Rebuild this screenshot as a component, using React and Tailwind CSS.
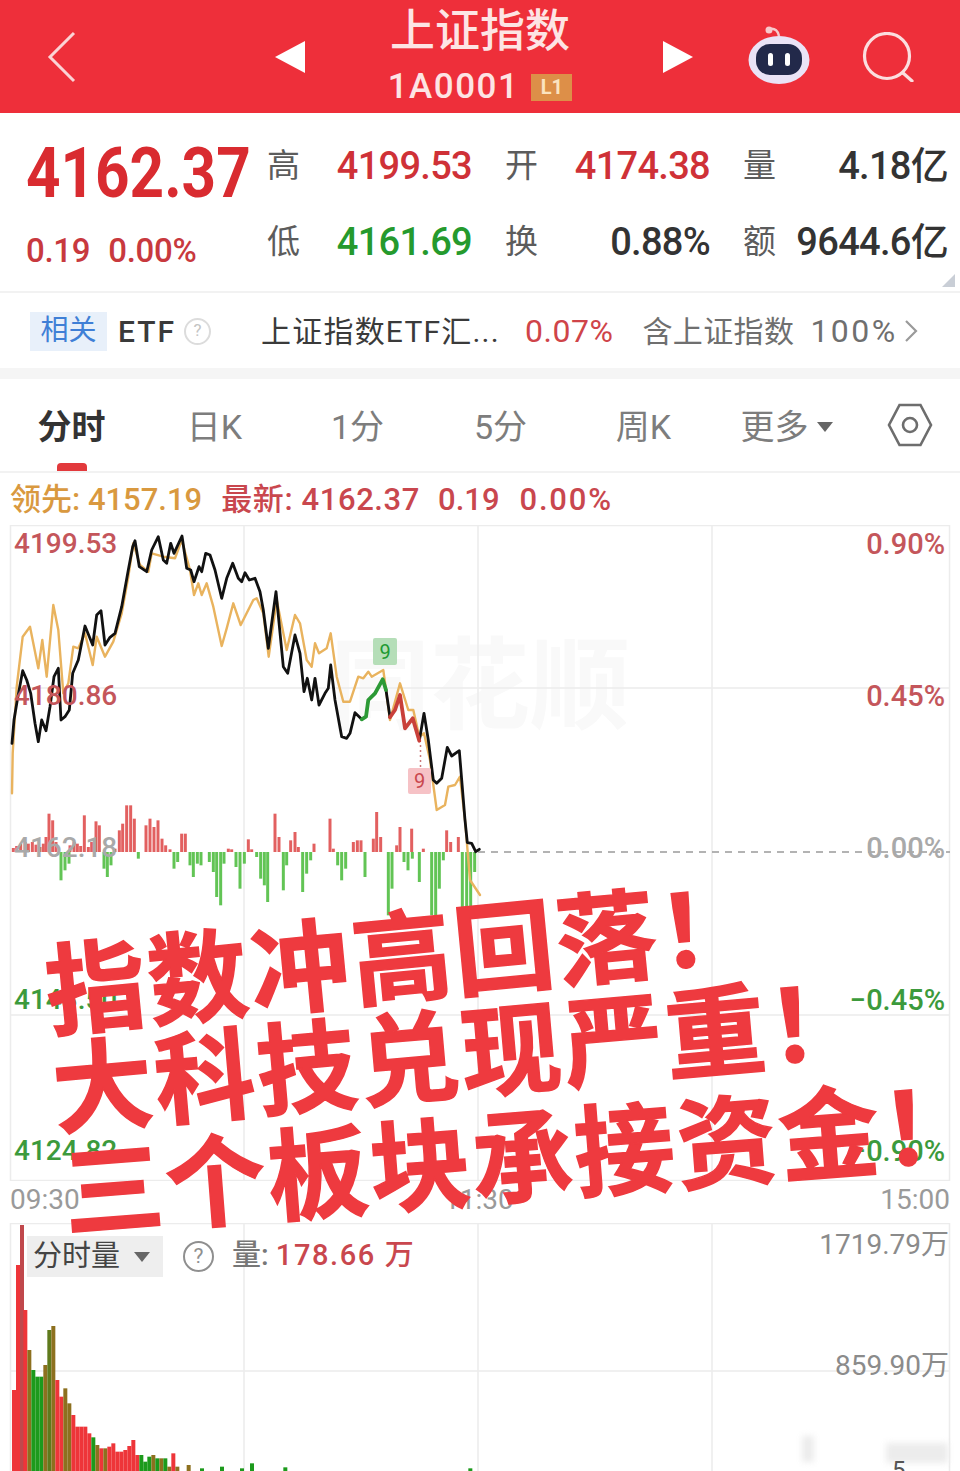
// App.jsx
import React from 'react';

// chart points are read off a 3x crop that starts at (0,520)
const toLine = (pts) => pts.map(([x, y]) => `${(x / 3).toFixed(1)},${(520 + y / 3).toFixed(1)}`).join(' ');

const blackA = [[36,670],[42,600],[52,540],[68,452],[80,480],[92,520],[105,610],[115,665],[125,600],[138,632],[150,560],[162,470],[175,445],[183,600],[195,590],[208,570],[218,460],[235,420],[255,318],[278,375],[290,285],[303,272],[315,375],[330,352],[345,340],[365,260],[385,150],[398,80],[405,62],[418,140],[440,155],[455,90],[475,50],[490,120],[500,130],[512,70],[522,100],[546,48],[560,145],[572,150],[582,185],[597,140],[605,155],[617,100],[630,105],[645,150],[665,235],[680,175],[698,130],[715,175],[725,185],[735,158],[748,180],[765,175],[780,215],[790,270],[805,385],[828,215],[850,440],[863,460],[885,345],[900,400],[912,515],[922,475],[935,540],[945,475],[957,555],[975,520],[985,505],[992,435],[1005,540],[1025,650],[1040,655],[1050,640],[1065,578],[1085,598]];
const greenPart = [[1085,598],[1098,590],[1105,540],[1125,520],[1148,478],[1158,510]];
const blackB = [[1158,510],[1170,592]];
const redPart = [[1170,592],[1185,570],[1200,525],[1215,625],[1238,595],[1258,662]];
const blackC = [[1258,662],[1272,580],[1285,660],[1300,780],[1310,790],[1325,775],[1342,682],[1355,708],[1378,692],[1395,900],[1402,968],[1415,970],[1427,995],[1438,988]];
const orange = [[36,820],[38,700],[50,500],[68,350],[90,320],[115,445],[127,360],[140,470],[160,255],[175,330],[190,520],[205,490],[220,380],[235,385],[255,340],[278,435],[290,350],[315,410],[340,365],[365,280],[385,170],[400,70],[420,135],[445,155],[455,100],[490,110],[525,115],[545,60],[570,150],[582,225],[595,190],[605,225],[620,190],[640,260],[665,378],[680,325],[700,250],[722,315],[760,240],[770,235],[790,280],[806,410],[830,240],[860,390],[885,285],[900,310],[920,420],[935,440],[945,370],[957,400],[980,385],[992,340],[1010,470],[1030,545],[1050,545],[1075,470],[1090,475],[1105,455],[1115,470],[1150,450],[1170,600],[1200,490],[1225,570],[1240,570],[1258,650],[1272,640],[1290,720],[1310,870],[1335,855],[1345,800],[1365,795],[1380,770],[1395,900],[1410,1080],[1440,1125]];

const flowBars = [[40,12],[50,18],[62,25],[75,30],[85,25],[97,30],[108,22],[120,15],[130,25],[138,45],[147,115],[158,95],[168,30],[210,20],[222,30],[232,25],[242,18],[253,110],[265,15],[275,30],[288,92],[298,80],[345,10],[358,65],[368,85],[380,140],[392,140],[403,100],[438,80],[450,100],[462,75],[474,95],[486,40],[497,20],[510,8],[545,55],[556,55],[685,10],[695,8],[745,38],[755,8],[825,115],[837,45],[872,35],[885,60],[895,15],[942,25],[990,100],[1000,10],[1060,30],[1072,35],[1083,35],[1120,40],[1130,120],[1142,45],[1190,20],[1200,75],[1235,70],[1270,10],[1340,65],[1352,30],[1375,45],[183,-85],[195,-55],[207,-35],[312,-50],[322,-75],[333,-40],[415,-20],[522,-50],[533,-30],[570,-40],[580,-75],[592,-35],[603,-40],[628,-30],[640,-60],[650,-135],[662,-160],[672,-35],[708,-45],[720,-110],[733,-35],[770,-15],[782,-80],[793,-100],[803,-150],[850,-115],[860,-40],[908,-120],[920,-65],[932,-25],[1013,-40],[1025,-85],[1037,-50],[1095,-75],[1165,-190],[1176,-110],[1212,-30],[1224,-55],[1237,-20],[1258,-90],[1295,-190],[1307,-190],[1318,-110],[1330,-25],[1387,-190],[1400,-190],[1412,-190],[1424,-60]];

const R = '#ee3539';
const G = '#1c9a1c';
const O = '#8d701f';
const volBars = [[36,570,R],[48,195,R],[60,75,'#c0484c'],[70,330,R],[82,450,O],[94,510,G],[106,530,G],[118,530,G],[130,495,O],[142,390,'#5f7a1c'],[154,378,O],[166,540,R],[178,590,R],[190,565,O],[202,610,O],[214,645,R],[226,680,R],[238,680,R],[250,680,R],[262,700,R],[274,712,G],[286,735,O],[298,745,R],[310,745,O],[322,740,R],[334,730,R],[346,755,R],[358,755,R],[370,750,R],[382,738,R],[394,720,R],[406,765,R],[418,765,G],[430,785,G],[442,770,G],[454,765,O],[466,775,G],[478,775,O],[490,775,G],[502,800,O],[514,760,R],[526,800,O],[560,795,O],[600,805,G],[660,800,G],[720,805,G],[750,790,G],[850,802,G],[1405,805,G]];

const Stat = ({ label, value, color }) => (
  <div className="flex items-center justify-between">
    <span className="text-[33px] text-[#5c5c5c]">{label}</span>
    <span className={`text-[38px] font-medium tracking-[-0.7px] ${color}`}>{value}</span>
  </div>
);

const Tab = ({ children, active }) => (
  <div className={`relative flex h-full w-[143px] shrink-0 items-center justify-center pt-[4px] text-[34px] ${active ? 'font-bold text-[#333]' : 'text-[#7d7d7d]'}`}>
    {children}
    {active && <span className="absolute bottom-0 left-[57px] h-[8px] w-[30px] rounded-t-[4px] bg-[#e2393c]" />}
  </div>
);

const MainChart = () => (
  <svg className="block h-[656px] w-[960px]" viewBox="0 525 960 656">
    <g stroke="#ececec" strokeWidth="1.5" fill="none">
      <rect x="10.5" y="525.5" width="939" height="655" />
      <path d="M244 526V1180M478 526V1180M712 526V1180M11 688H949M11 1015H949" />
    </g>
    <path d="M478 852H950" stroke="#9a9a9a" strokeWidth="1.5" strokeDasharray="7 6" />
    <g strokeWidth="3">
      {flowBars.map(([x, h]) => (
        <line key={x} x1={x / 3} x2={x / 3} y1="852" y2={852 - h / 3} stroke={h > 0 ? '#e26060' : '#62c455'} />
      ))}
    </g>
    <g fill="none" strokeLinejoin="round" strokeLinecap="round">
      <polyline points={toLine(orange)} stroke="#e9b35e" strokeWidth="2.4" />
      <polyline points={toLine(blackA)} stroke="#111" strokeWidth="2.8" />
      <polyline points={toLine(blackB)} stroke="#111" strokeWidth="2.8" />
      <polyline points={toLine(blackC)} stroke="#111" strokeWidth="2.8" />
      <polyline points={toLine(greenPart)} stroke="#2c9a36" strokeWidth="3.8" />
      <polyline points={toLine(redPart)} stroke="#c9403a" strokeWidth="3.8" />
    </g>
    <path d="M420.5 745V768" stroke="#c77" strokeWidth="1.5" strokeDasharray="2 3" />
  </svg>
);

const VolumeChart = () => (
  <svg className="block h-[248px] w-[960px]" viewBox="0 1223 960 248">
    <g stroke="#ececec" strokeWidth="1.5" fill="none">
      <path d="M10 1223.5H950M10.5 1223V1471M949.5 1223V1471M244 1223V1471M478 1223V1471M712 1223V1471M11 1371H949" />
    </g>
    {volBars.map(([x, y, c]) => (
      <rect key={x} x={x / 3} y={1200 + y / 3} width="4" height="300" fill={c} />
    ))}
    <g className="blur-[3px]" fill="#ececec">
      <rect x="802" y="1436" width="12" height="26" />
      <rect x="886" y="1443" width="62" height="20" />
    </g>
  </svg>
);

export default function App() {
  return (
    <div className="relative h-[1471px] w-[960px] overflow-hidden bg-white [font-family:Roboto,'Noto_Sans_CJK_SC',sans-serif]">
      {/* header */}
      <header className="flex h-[113px] items-center bg-[#ee2f3a]">
        <svg className="ml-[47px] h-[52px] w-[30px] shrink-0" viewBox="0 0 30 52" fill="none" stroke="#fbd3d5" strokeWidth="3">
          <path d="M27 2 3 26l24 24" />
        </svg>
        <svg className="ml-[198px] h-[32px] w-[30px] shrink-0" viewBox="0 0 30 32" fill="#fff"><path d="M30 0v32L0 16z" /></svg>
        <div className="flex w-[358px] shrink-0 flex-col items-center pr-[8px] text-[#fde4e4]">
          <div className="text-[45px] leading-[52px] font-medium">上证指数</div>
          <div className="mt-[9px] flex items-center">
            <span className="text-[35px] leading-[40px] font-medium tracking-[1.5px]">1A0001</span>
            <span className="ml-[12px] flex h-[27px] w-[41px] items-center justify-center bg-[#dd8f48] text-[20px] font-bold text-[#fbe3c0]">L1</span>
          </div>
        </div>
        <svg className="h-[32px] w-[30px] shrink-0" viewBox="0 0 30 32" fill="#fff"><path d="M0 0v32l30-16z" /></svg>
        <svg className="mb-[4px] ml-[54px] h-[58px] w-[64px] shrink-0" viewBox="0 0 64 58">
          <path d="M32 10c-1-5-4-8-9-7" fill="none" stroke="#f7c9cc" strokeWidth="2.5" />
          <circle cx="22" cy="4" r="3.5" fill="#f7c9cc" />
          <ellipse cx="32" cy="34" rx="30.5" ry="24" fill="#eae3f6" />
          <rect x="9" y="18" width="46" height="31" rx="14" fill="#22294a" />
          <rect x="21" y="27" width="5" height="13" rx="2.5" fill="#fff" />
          <rect x="38" y="27" width="5" height="13" rx="2.5" fill="#fff" />
        </svg>
        <svg className="ml-[51px] h-[50px] w-[52px] shrink-0" viewBox="0 0 52 50" fill="none" stroke="#fbdedf" strokeWidth="3.2">
          <circle cx="25" cy="24" r="22.5" />
          <path d="m41 41 9 8" strokeLinecap="round" />
        </svg>
      </header>

      {/* quote summary */}
      <section className="relative flex h-[180px] border-b-2 border-[#f2f2f2]">
        <div className="w-[267px] shrink-0 pl-[26px]">
          <div className="mt-[24px] origin-left scale-x-[0.86] text-[70px] leading-[72px] font-bold whitespace-nowrap text-[#d92b30]">4162.37</div>
          <div className="mt-[22px] flex gap-[18px] text-[33px] leading-[40px] font-medium tracking-[-0.3px] text-[#c8393e]">
            <span>0.19</span>
            <span>0.00%</span>
          </div>
        </div>
        <div className="mt-[15px] grid h-[152px] w-[681px] grid-cols-3 grid-rows-2 gap-x-[33px]">
          <Stat label="高" value="4199.53" color="text-[#cf3137]" />
          <Stat label="开" value="4174.38" color="text-[#cf3137]" />
          <Stat label="量" value="4.18亿" color="text-[#333]" />
          <Stat label="低" value="4161.69" color="text-[#259a2d]" />
          <Stat label="换" value="0.88%" color="text-[#333]" />
          <Stat label="额" value="9644.6亿" color="text-[#333]" />
        </div>
        <span className="absolute right-[5px] bottom-[4px] h-0 w-0 border-b-[13px] border-l-[13px] border-b-[#c9ced6] border-l-transparent" />
      </section>

      {/* related etf */}
      <section className="flex h-[75px] items-center pt-[1px] pl-[30px] text-[30px]">
        <span className="flex h-[39px] w-[77px] items-center justify-center bg-[#e8f0fa] text-[28px] text-[#3f7fd6]">相关</span>
        <span className="ml-[11px] font-medium tracking-[2px] text-[#3a3a3a]">ETF</span>
        <span className="ml-[8px] flex h-[27px] w-[27px] items-center justify-center rounded-full border-2 border-[#dcdcdc] text-[17px] text-[#c4c4c4]">?</span>
        <span className="ml-[50px] w-[264px] shrink-0 tracking-[1.2px] whitespace-nowrap text-[#3a3a3a]">上证指数ETF汇...</span>
        <span className="text-[32px] tracking-[0.5px] text-[#cf4449]">0.07%</span>
        <span className="ml-[29px] tracking-[0.4px] text-[#6f6f6f]">含上证指数</span>
        <span className="ml-[16px] text-[32px] tracking-[2.5px] text-[#6f6f6f]">100%</span>
        <svg className="ml-[6px] h-[24px] w-[14px]" viewBox="0 0 14 24" fill="none" stroke="#9a9a9a" strokeWidth="2.2"><path d="m2 2 10 10L2 22" /></svg>
      </section>
      <div className="h-[11px] bg-[#f5f5f5]" />

      {/* period tabs */}
      <nav className="flex h-[94px] items-center border-b-2 border-[#f2f2f2]">
        <Tab active>分时</Tab>
        <Tab>日K</Tab>
        <Tab>1分</Tab>
        <Tab>5分</Tab>
        <Tab>周K</Tab>
        <Tab>
          更多
          <span className="ml-[8px] h-0 w-0 border-x-[8px] border-t-[10px] border-x-transparent border-t-[#666]" />
        </Tab>
        <svg className="ml-[29px] h-[44px] w-[46px] shrink-0" viewBox="0 0 46 44" fill="none" stroke="#6d6d6d" strokeWidth="2.6">
          <path d="M12.5 2h21L44 22 33.5 42h-21L2 22z" />
          <circle cx="23" cy="22" r="7" />
        </svg>
      </nav>

      {/* legend */}
      <div className="flex h-[52px] items-center pt-[3px] pl-[10px] text-[31px] font-medium">
        <span className="text-[#d9993f]">领先: 4157.19</span>
        <span className="ml-[19px] tracking-[0.6px] text-[#c9474e]">最新: 4162.37</span>
        <span className="ml-[18px] text-[#c9474e]">0.19</span>
        <span className="ml-[20px] tracking-[1.8px] text-[#c9474e]">0.00%</span>
      </div>

      {/* main chart */}
      <div className="relative">
        <div className="absolute top-[112px] left-[330px] text-[100px] leading-none font-bold text-[#f9f9f9]">同花顺</div>
        <div className="relative"><MainChart /></div>
        <span className="absolute top-[113px] left-[373px] flex h-[27px] w-[24px] items-center justify-center rounded-[2px] bg-[#b5deb8] text-[20px] text-[#1f9a33]">9</span>
        <span className="absolute top-[243px] left-[408px] flex h-[26px] w-[23px] items-center justify-center rounded-[2px] bg-[#f6c2c6] text-[20px] text-[#c9474e]">9</span>
        <div className="text-[29px] leading-[34px] font-medium">
          <span className="absolute top-[2px] left-[14px] text-[28px] text-[#c4565b]">4199.53</span>
          <span className="absolute top-[154px] left-[14px] text-[28px] text-[#c4565b]">4180.86</span>
          <span className="absolute top-[306px] left-[14px] text-[28px] text-[#a9a9a9]">4162.18</span>
          <span className="absolute top-[458px] left-[14px] text-[28px] text-[#3c9a3c]">4143.50</span>
          <span className="absolute top-[609px] left-[14px] text-[28px] text-[#3c9a3c]">4124.82</span>
          <span className="absolute top-[2px] right-[15px] text-[#c4565b]">0.90%</span>
          <span className="absolute top-[154px] right-[15px] text-[#c4565b]">0.45%</span>
          <span className="absolute top-[306px] right-[15px] text-[#a9a9a9]">0.00%</span>
          <span className="absolute top-[458px] right-[15px] text-[#3c9a3c]">−0.45%</span>
          <span className="absolute top-[609px] right-[15px] text-[#3c9a3c]">−0.90%</span>
        </div>
      </div>

      {/* time axis */}
      <div className="relative flex h-[42px] items-center justify-between px-[10px] pb-[4px] text-[28px] text-[#9a9a9a]">
        <span>09:30</span>
        <span className="absolute left-[444px]">11:30</span>
        <span>15:00</span>
      </div>

      {/* volume chart */}
      <div className="relative">
        <VolumeChart />
        <div className="absolute top-[13px] left-[27px] flex h-[41px] w-[136px] items-center bg-[#eeeeee] pl-[6px] text-[29px] text-[#444]">
          分时量
          <span className="ml-[14px] h-0 w-0 border-x-[8px] border-t-[10px] border-x-transparent border-t-[#666]" />
        </div>
        <span className="absolute top-[18px] left-[183px] flex h-[31px] w-[31px] items-center justify-center rounded-full border-2 border-[#8f8f8f] text-[21px] text-[#8f8f8f]">?</span>
        <div className="absolute top-[13px] left-[232px] text-[29px] leading-[38px] font-medium">
          <span className="text-[#777]">量: </span>
          <span className="tracking-[1.6px] text-[#c9474e]">178.66 万</span>
        </div>
        <span className="absolute top-[3px] right-[11px] text-[28px] leading-[38px] text-[#8b8b8b]">1719.79万</span>
        <span className="absolute top-[124px] right-[11px] text-[28px] leading-[38px] text-[#8b8b8b]">859.90万</span>
        <span className="absolute top-[232px] left-[892px] text-[24px] leading-[30px] text-[#555]">5</span>
      </div>

      {/* slogan pasted over the chart */}
      <div className="absolute top-[933px] left-[45px] w-[900px] text-[100px] leading-[105px] font-bold tracking-[2.5px] whitespace-nowrap text-[#ee3a3f] [-webkit-text-stroke:1.5px_#ee3a3f] [font-family:'Noto_Sans_CJK_SC',sans-serif]">
        <div className="h-[98px] origin-left -rotate-[5.5deg]">指数冲高回落！</div>
        <div className="ml-[7px] h-[103px] origin-left -rotate-[5deg]">大科技兑现严重！</div>
        <div className="ml-[18px] origin-left -rotate-[4.4deg]">三个板块承接资金！</div>
      </div>
    </div>
  );
}
